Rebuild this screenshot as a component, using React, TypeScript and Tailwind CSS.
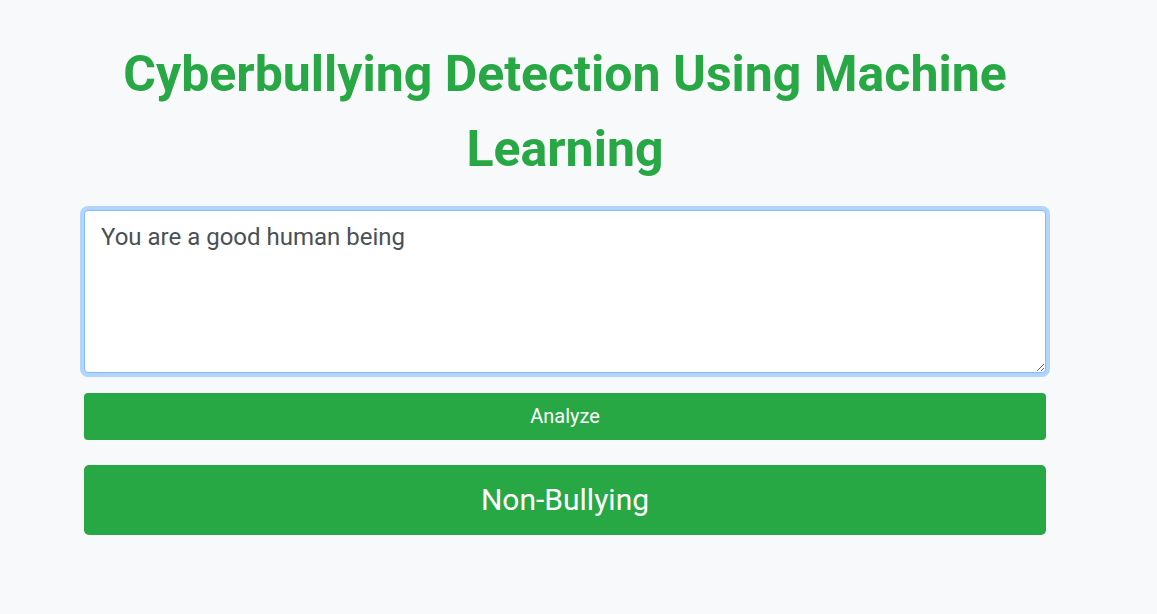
import React from "react";

export default function App() {
  return (
    <div className="min-h-[614px] w-full bg-[#f8f9fa]" style={{ fontFamily: "Roboto, 'Liberation Sans', sans-serif" }}>
      <div className="ml-[84px] w-[962px] pt-[37px]">
        <h1 className="text-center text-[50px] font-bold leading-[75px] text-[#28a745]">
          Cyberbullying Detection Using Machine Learning
        </h1>
        <textarea
          className="mt-[23px] block h-[163px] w-full resize-y rounded-[4px] border border-[#80bdff] bg-white px-[16px] pt-[8px] pb-[6px] text-[24px] leading-[36px] text-[#495057] shadow-[0_0_0_4px_rgba(0,123,255,0.28)] outline-none"
          defaultValue="You are a good human being"
        />
        <button className="mt-[20px] block h-[47px] w-full rounded-[4px] bg-[#28a745] pb-[2px] text-[20px] text-white">
          Analyze
        </button>
        <div className="mt-[25px] flex h-[70px] w-full items-center justify-center rounded-[5px] bg-[#28a745] pb-[2px] text-[30px] text-white">
          Non-Bullying
        </div>
      </div>
    </div>
  );
}
